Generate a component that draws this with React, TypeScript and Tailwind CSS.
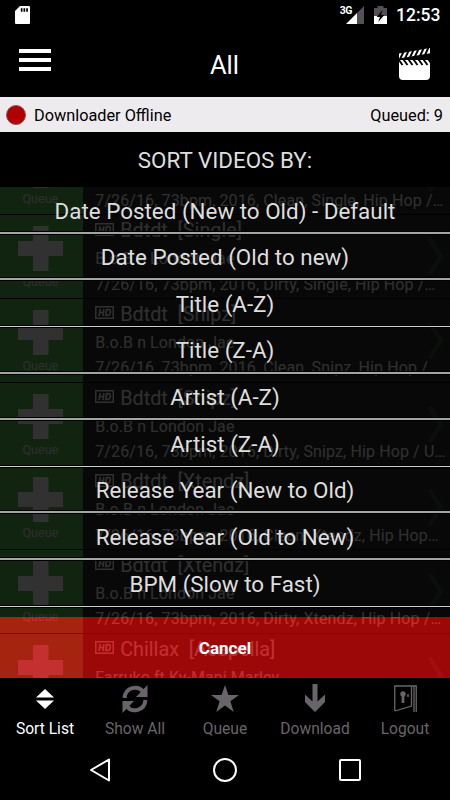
import type { ReactNode } from 'react';

const videos = [
  { title: 'Bdtdt  [Single]', artist: 'B.o.B n London Jae', info: '7/26/16, 73bpm, 2016, Clean, Single, Hip Hop /…' },
  { title: 'Bdtdt  [Single]', artist: 'B.o.B n London Jae', info: '7/26/16, 73bpm, 2016, Dirty, Single, Hip Hop /…' },
  { title: 'Bdtdt  [Snipz]', artist: 'B.o.B n London Jae', info: '7/26/16, 73bpm, 2016, Clean, Snipz, Hip Hop /' },
  { title: 'Bdtdt  [Snipz]', artist: 'B.o.B n London Jae', info: '7/26/16, 73bpm, 2016, Dirty, Snipz, Hip Hop / U…' },
  { title: 'Bdtdt  [Xtendz]', artist: 'B.o.B n London Jae', info: '7/26/16, 73bpm, 2016, Clean, Xtendz, Hip Hop…' },
  { title: 'Bdtdt  [Xtendz]', artist: 'B.o.B n London Jae', info: '7/26/16, 73bpm, 2016, Dirty, Xtendz, Hip Hop /…' },
  { title: 'Chillax  [Acapella]', artist: 'Farruko ft Ky-Mani Marley', info: '' },
];

const sortOptions = [
  'Date Posted (New to Old) - Default',
  'Date Posted (Old to new)',
  'Title (A-Z)',
  'Title (Z-A)',
  'Artist (A-Z)',
  'Artist (Z-A)',
  'Release Year (New to Old)',
  'Release Year (Old to New)',
  'BPM (Slow to Fast)',
];

function StatusBar() {
  return (
    <div className="flex h-[30px] items-center pr-[10px] pl-[15px]">
      <svg className="h-[18px] w-[15px]" viewBox="0 0 15 18">
        <path d="M5 0h9q1 0 1 1v16q0 1-1 1H1q-1 0-1-1V5z" fill="#fff" />
        <path d="M5.800 2.200h1.700v3.500H5.800zM8.500 2.200h1.700v3.500H8.500zM11.200 2.200h1.700v3.500h-1.700z" fill="#000" />
      </svg>
      <div className="ml-auto flex items-center">
        <span className="-mr-[6px] mb-[8px] text-[10.500px] leading-none font-bold tracking-[-0.500px]">3G</span>
        <svg className="h-[18px] w-[18px]" viewBox="0 0 18 18">
          <path d="M18 0v18H11V7z" fill="#544f55" />
          <path d="M11 7v11H0z" fill="#fff" />
        </svg>
        <svg className="ml-[10px] h-[18px] w-[13px]" viewBox="0 0 13 18">
          <path d="M0 2h3.500V0h6v2H13v8H0z" fill="#544f55" />
          <path d="M0 10h13v8H0z" fill="#fff" />
          <path d="M8.500 4 2.700 11h3.300L4.200 16 10.300 9H7z" fill="#000" />
        </svg>
        <span className="mt-px ml-[9px] w-[44px] text-[17.500px] leading-none font-medium">12:53</span>
      </div>
    </div>
  );
}

function TitleBar() {
  return (
    <div className="grid h-[67px] grid-cols-3 items-start pr-[20px] pl-[19px]">
      <div className="mt-[19px] flex w-[32px] flex-col gap-[5px]">
        <div className="h-1 bg-white" />
        <div className="h-1 bg-white" />
        <div className="h-1 bg-white" />
      </div>
      <div className="mt-[18px] text-center text-[25.500px] leading-[34px]">All</div>
      <svg className="mt-[18px] h-[32px] w-[31px] justify-self-end" viewBox="0 0 31 32">
        <path d="M0 5.500 31 0v5.200L0 10.500zM0 12h31v16q0 4-4 4H4q-4 0-4-4z" fill="#fff" />
        <path
          d="M1 11 4.500 4M6 10.500 9.500 3M11 9.500l3.500-7.500M16 8.500l3.500-7.500M21 8l3.500-7.500M26 7l3.500-7.500M-.500 11.500l4 5.500M4.500 11.500l4 5.500M9.500 11.500l4 5.500M14.500 11.500l4 5.500M19.500 11.500l4 5.500M24.500 11.500l4 5.500M29.500 11.500l4 5.500"
          stroke="#000"
          strokeWidth="1.900"
        />
      </svg>
    </div>
  );
}

function VideoRow({ title, artist, info }: { title: string; artist: string; info: string }) {
  return (
    <div className="flex h-[83.700px] shrink-0 border-t border-black">
      <div className="flex w-[82.700px] flex-col items-center bg-[#55b450] pt-[11px] pr-[2px]">
        <svg className="h-[45px] w-[45px] shrink-0" viewBox="0 0 45 45">
          <path d="M15 0h15.500v15H45v15H30.500v15H15V30H0V15h15z" fill="#f2f2f2" />
        </svg>
        <span className="mt-[3px] text-[12.500px] leading-4 text-[#e6e6e6]">Queue</span>
      </div>
      <div className="w-[344px] shrink-0 pl-[12.500px] whitespace-pre text-[#ececec]">
        <div className="flex h-[30px] items-center">
          <svg className="mr-[6px] mb-[2px] h-[13px] w-[19px]" viewBox="0 0 19 13" fill="none" stroke="#ececec">
            <path d="M.75.75h17.500v11.500H.75z" strokeWidth="1.500" />
            <path d="M5.200 3 4 10M9 3 7.800 10M4.800 6.500h3.500M11.700 3.700l-1 5.600h2.200q2 0 2.400-2.800t-1.600-2.800z" strokeWidth="1.700" />
          </svg>
          <span className="pt-[2px] text-[19.800px] leading-[30px]">{title}</span>
        </div>
        <div className="mt-[2px] text-[16px] leading-[24px] tracking-[0.080px]">{artist}</div>
        <div className="mt-[1.500px] text-[16px] leading-[24px] tracking-[0.120px]">{info}</div>
      </div>
      <svg className="mt-[23px] ml-px h-[37px] w-[16px] shrink-0" viewBox="0 0 16 37" fill="none">
        <path d="M1.500 1 13 18.500 1.500 36" stroke="#3a4a3f" strokeWidth="4.500" />
      </svg>
    </div>
  );
}

function SortSheet() {
  return (
    <div className="absolute inset-0 flex flex-col">
      <div className="h-[430px] bg-black/80">
        {sortOptions.map((option, i) => (
          <div
            key={option}
            className={`flex h-[46.650px] items-center justify-center pt-[4px] text-[22.400px] whitespace-nowrap text-[#dedede] shadow-[0_1px_0_#000,inset_0_-1px_0_#000] ${
              i % 3 === 2 ? 'border-b border-[#d0d0d0]' : 'border-b-2 border-[#a3a5a3]'
            }`}
          >
            {option}
          </div>
        ))}
      </div>
      <button className="flex-1 bg-[#b90000]/80 pt-[2px] text-[17px] font-bold text-white">Cancel</button>
    </div>
  );
}

function Tab({ label, active, children }: { label: string; active?: boolean; children: ReactNode }) {
  return (
    <div className={`flex w-[90px] flex-col items-center ${active ? 'text-white' : 'text-[#69646a]'}`}>
      <div className="flex h-[40px] items-center">{children}</div>
      <span className="mt-px text-[15.600px] leading-[21px]">{label}</span>
    </div>
  );
}

function TabBar() {
  return (
    <div className="flex h-[70px]">
      <Tab label="Sort List" active>
        <svg className="mt-[1px] h-[20px] w-[18px]" viewBox="0 0 18 20" fill="currentColor">
          <path d="M9 0l9 8.500H0zM0 11.500h18L9 20z" />
        </svg>
      </Tab>
      <Tab label="Show All">
        <svg className="mt-[2px] h-[28px] w-[26px]" viewBox="0 0 26 28">
          <path d="M2.500 13C3.500 2 16 0 21 6.500M23.500 15c-1 11-13.500 13-18.500 6.500" fill="none" stroke="currentColor" strokeWidth="4" />
          <path d="M25.500 0v12H14zM.500 28V16H12z" fill="currentColor" />
        </svg>
      </Tab>
      <Tab label="Queue">
        <svg className="mt-[1px] h-[27px] w-[28px]" viewBox="0 0 28 27" fill="currentColor">
          <path d="M14 0l3.400 10H28l-8.600 6.300L22.700 27 14 20.500 5.300 27l3.300-10.700L0 10h10.600z" />
        </svg>
      </Tab>
      <Tab label="Download">
        <svg className="h-[28px] w-[20px]" viewBox="0 0 20 28" fill="currentColor">
          <path d="M7.500 0h5v17.500L20 10.500v7.500L10 28 0 18v-7.500l7.500 7z" />
        </svg>
      </Tab>
      <Tab label="Logout">
        <svg className="mt-[1px] h-[27px] w-[23px]" viewBox="0 0 23 27" fill="none" stroke="currentColor">
          <path d="M.75 26V1h21.500v26M20 1v26M17.500 3v18L1 26M17.500 3V1" strokeWidth="1.300" />
          <circle cx="9" cy="9" r="2.700" fill="currentColor" stroke="none" />
          <path d="M9 9v9" strokeWidth="2.800" />
          <path d="M14 9v3" strokeWidth="1.500" />
        </svg>
      </Tab>
    </div>
  );
}

function NavBar() {
  return (
    <div className="flex h-[52px] items-center justify-between pr-[89px] pb-[8px] pl-[89px]">
      <svg className="h-[24px] w-[22px]" viewBox="0 0 22 24" fill="none" stroke="#fff" strokeWidth="2" strokeLinejoin="round">
        <path d="M20 1.500v21L2 12z" />
      </svg>
      <div className="h-[24px] w-[24px] rounded-full border-2 border-white" />
      <div className="h-[22px] w-[22px] rounded-[2px] border-2 border-white" />
    </div>
  );
}

export default function App() {
  return (
    <div className="flex h-[800px] w-[450px] flex-col overflow-hidden bg-black font-[Roboto,sans-serif] text-white">
      <StatusBar />
      <TitleBar />
      <div className="flex h-[35px] items-center bg-[#eeebee] pr-[7px] pl-[6px] text-[16.300px] text-black">
        <div className="mr-[8px] h-[20px] w-[20px] rounded-full border border-[#8b5555] bg-[#b00000]" />
        <span className="mt-[3px]">Downloader Offline</span>
        <span className="mt-[3px] ml-auto">Queued: 9</span>
      </div>
      <div className="flex h-[55px] items-center justify-center pt-[3px] text-[22.400px] text-[#dedede]">SORT VIDEOS BY:</div>
      <div className="relative h-[491px] overflow-hidden">
        <div className="-mt-[56.500px] flex flex-col bg-[#282828]">
          {videos.map((video, i) => (
            <VideoRow key={i} {...video} />
          ))}
        </div>
        <SortSheet />
      </div>
      <TabBar />
      <NavBar />
    </div>
  );
}
